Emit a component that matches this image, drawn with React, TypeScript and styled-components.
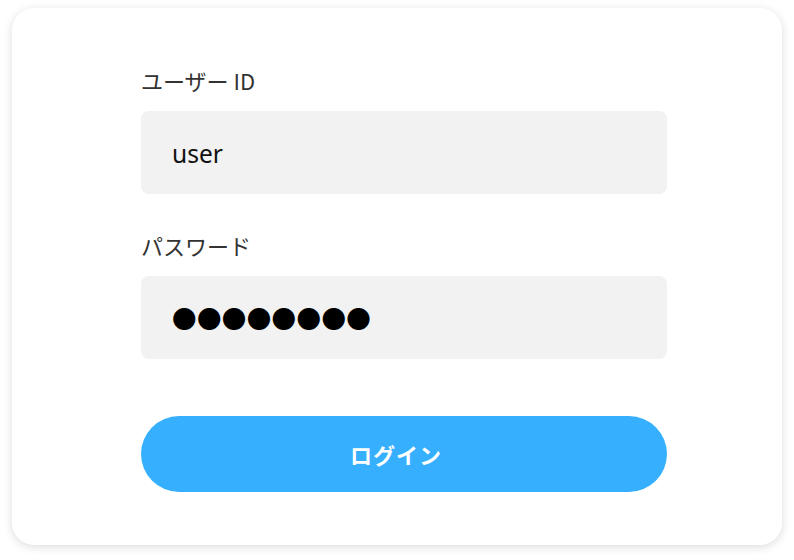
import React from "react";
import styled, { createGlobalStyle } from "styled-components";

const Global = createGlobalStyle`
  html, body { margin: 0; padding: 0; background: #ffffff; }
  body { font-family: "Noto Sans CJK JP", "Noto Sans", sans-serif; }
  * { box-sizing: border-box; }
`;

const Page = styled.div`
  padding: 8px 12px 15px;
`;

const Card = styled.div`
  background: #ffffff;
  border-radius: 22px;
  box-shadow: 0 2px 10px rgba(0, 0, 0, 0.14);
  height: 537px;
  padding: 57px 0 0 129px;
  display: flex;
`;

const Form = styled.form`
  width: 526px;
  display: flex;
  flex-direction: column;
`;

const Label = styled.label<{ $top?: number }>`
  display: block;
  font-size: 22px;
  line-height: 30px;
  color: #333333;
  margin-top: ${(p) => p.$top ?? 0}px;
  margin-bottom: 16px;
`;

const Field = styled.div`
  height: 83px;
  background: #f2f2f2;
  border-radius: 8px;
  padding: 2px 31px 0;
  display: flex;
  align-items: center;
  font-family: "Noto Sans", sans-serif;
  font-size: 24.5px;
  color: #111111;
`;

const Dots = styled.span`
  font-family: "Noto Sans CJK JP", sans-serif;
  font-size: 24.5px;
  letter-spacing: 0.4px;
  color: #000000;
`;

const Button = styled.button`
  margin-top: 57px;
  height: 76px;
  border: none;
  border-radius: 38px;
  padding: 0 16px 0 0;
  background: #36b0fe;
  color: #ffffff;
  font-family: "Noto Sans CJK JP", sans-serif;
  font-weight: 700;
  font-size: 22px;
  letter-spacing: 1px;
  cursor: pointer;
`;

export default function App() {
  return (
    <>
      <Global />
      <Page>
        <Card>
          <Form onSubmit={(e) => e.preventDefault()}>
            <Label>ユーザー ID</Label>
            <Field>user</Field>
            <Label $top={36}>パスワード</Label>
            <Field>
              <Dots>●●●●●●●●</Dots>
            </Field>
            <Button type="submit">ログイン</Button>
          </Form>
        </Card>
      </Page>
    </>
  );
}
